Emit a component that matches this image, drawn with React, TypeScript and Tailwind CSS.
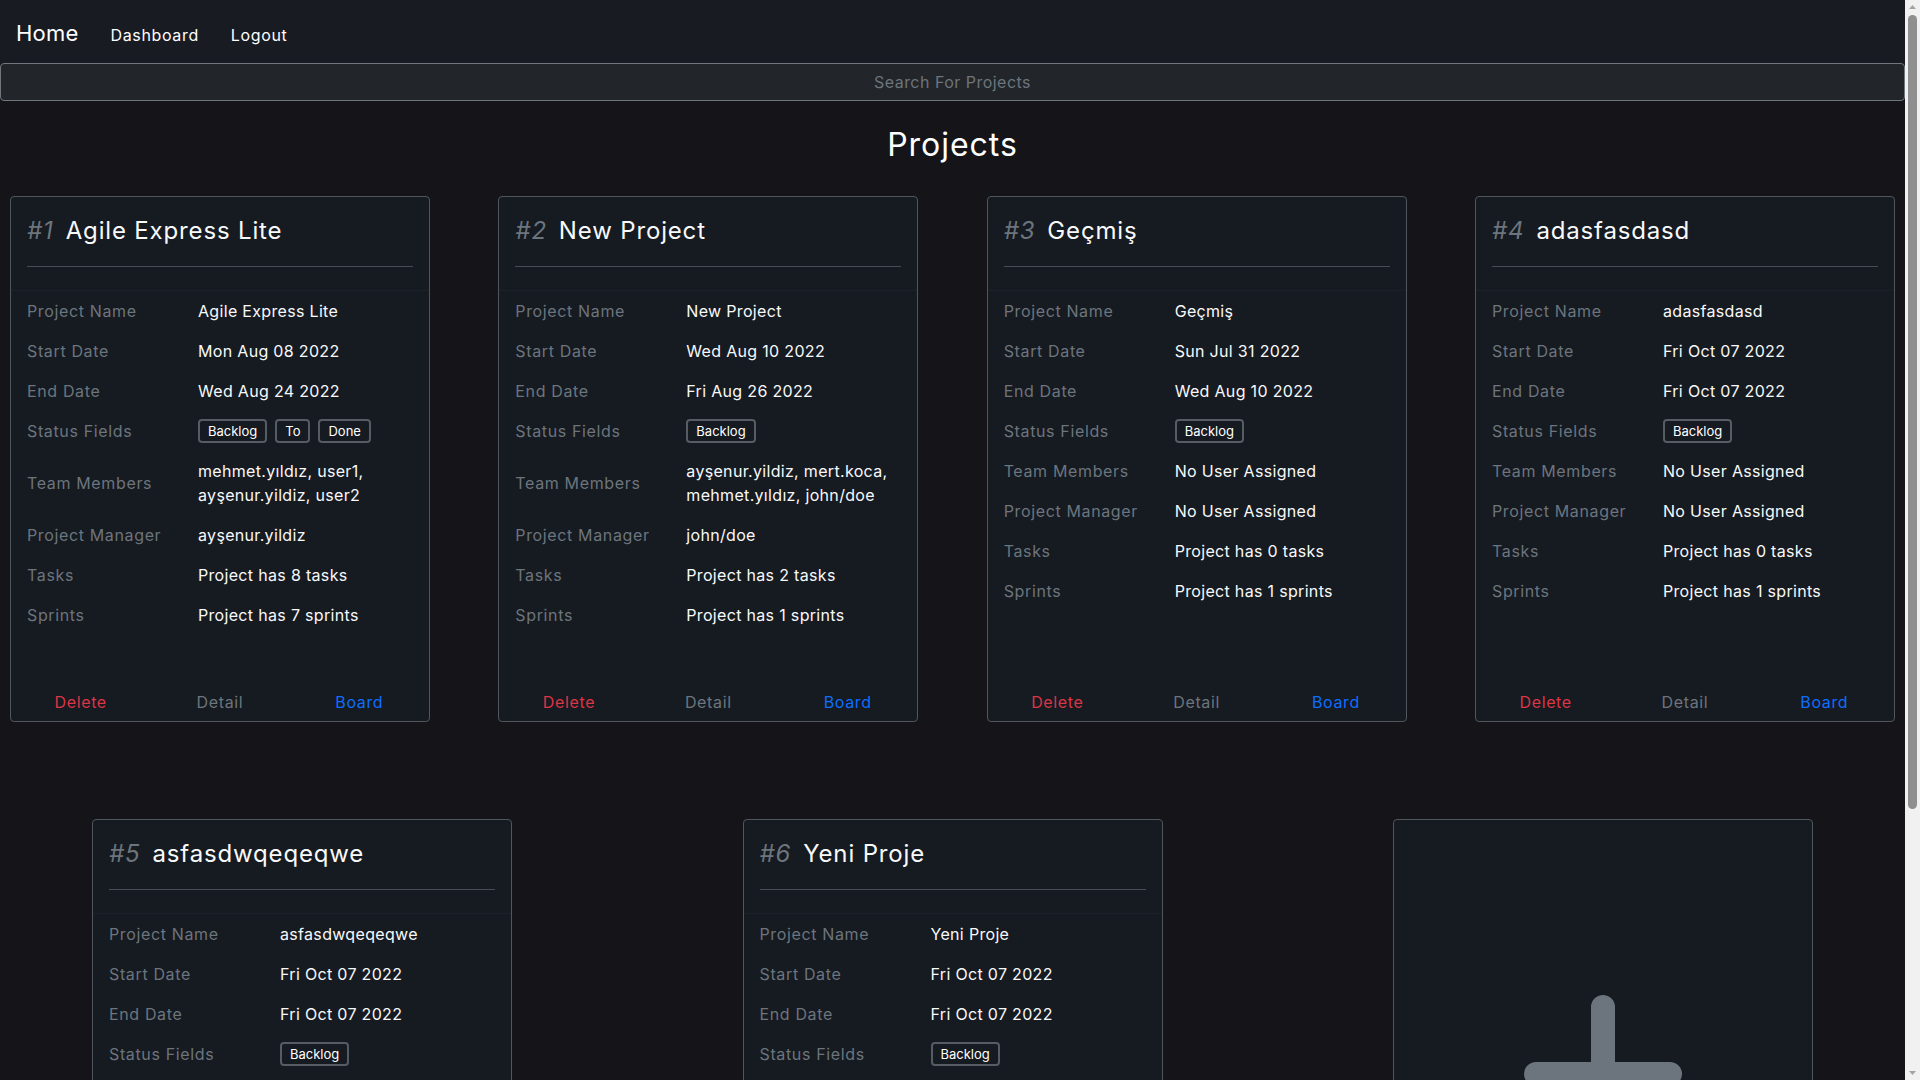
import React from 'react';

type Project = {
  id: number;
  name: string;
  start: string;
  end: string;
  statuses: string[];
  team: string[];
  manager: string;
  tasks: number;
  sprints: number;
};

const projects: Project[] = [
  {
    id: 1,
    name: 'Agile Express Lite',
    start: 'Mon Aug 08 2022',
    end: 'Wed Aug 24 2022',
    statuses: ['Backlog', 'To', 'Done'],
    team: ['mehmet.yıldız, user1,', 'ayşenur.yildiz, user2'],
    manager: 'ayşenur.yildiz',
    tasks: 8,
    sprints: 7,
  },
  {
    id: 2,
    name: 'New Project',
    start: 'Wed Aug 10 2022',
    end: 'Fri Aug 26 2022',
    statuses: ['Backlog'],
    team: ['ayşenur.yildiz, mert.koca,', 'mehmet.yıldız, john/doe'],
    manager: 'john/doe',
    tasks: 2,
    sprints: 1,
  },
  {
    id: 3,
    name: 'Geçmiş',
    start: 'Sun Jul 31 2022',
    end: 'Wed Aug 10 2022',
    statuses: ['Backlog'],
    team: ['No User Assigned'],
    manager: 'No User Assigned',
    tasks: 0,
    sprints: 1,
  },
  {
    id: 4,
    name: 'adasfasdasd',
    start: 'Fri Oct 07 2022',
    end: 'Fri Oct 07 2022',
    statuses: ['Backlog'],
    team: ['No User Assigned'],
    manager: 'No User Assigned',
    tasks: 0,
    sprints: 1,
  },
  {
    id: 5,
    name: 'asfasdwqeqeqwe',
    start: 'Fri Oct 07 2022',
    end: 'Fri Oct 07 2022',
    statuses: ['Backlog'],
    team: ['No User Assigned'],
    manager: 'No User Assigned',
    tasks: 0,
    sprints: 1,
  },
  {
    id: 6,
    name: 'Yeni Proje',
    start: 'Fri Oct 07 2022',
    end: 'Fri Oct 07 2022',
    statuses: ['Backlog'],
    team: ['No User Assigned'],
    manager: 'No User Assigned',
    tasks: 0,
    sprints: 1,
  },
];

function Row({ label, children }: { label: string; children: React.ReactNode }) {
  return (
    <div className="flex items-center py-2">
      <div className="w-[171px] shrink-0 text-[#6c757d] leading-6 tracking-[0.04em]">{label}</div>
      <div className="text-[#f8f9fa] leading-6">{children}</div>
    </div>
  );
}

function ProjectCard({ p }: { p: Project }) {
  return (
    <div className="w-[420px] h-[526px] shrink-0 flex flex-col rounded border border-[#4f565e] bg-[#161a21]">
      {/* header */}
      <div className="px-4 pt-4 pb-[23px] border-b border-[#1c2129]">
        <h3 className="flex items-center gap-3 text-2xl leading-9 tracking-[0.035em] text-[#f8f9fa]">
          <span className="italic text-[#6c757d]">#{p.id}</span>
          <span>{p.name}</span>
        </h3>
        <div className="mt-[17px] h-px bg-[#454d56]" />
      </div>

      {/* details */}
      <div className="px-4">
        <Row label="Project Name">{p.name}</Row>
        <Row label="Start Date">{p.start}</Row>
        <Row label="End Date">{p.end}</Row>
        <Row label="Status Fields">
          <div className="flex gap-2">
            {p.statuses.map((s) => (
              <span
                key={s}
                className="h-6 px-2 flex items-center rounded border-2 border-[#555c64] text-[13px] tracking-normal text-white"
              >
                {s}
              </span>
            ))}
          </div>
        </Row>
        <Row label="Team Members">
          {p.team.map((line) => (
            <div key={line} className="whitespace-nowrap">
              {line}
            </div>
          ))}
        </Row>
        <Row label="Project Manager">{p.manager}</Row>
        <Row label="Tasks">Project has {p.tasks} tasks</Row>
        <Row label="Sprints">Project has {p.sprints} sprints</Row>
      </div>

      {/* actions */}
      <div className="mt-auto grid grid-cols-3 text-center leading-6 tracking-[0.04em]">
        <button className="py-[7px] text-[#dc3545]">Delete</button>
        <button className="py-[7px] text-[#6c757d]">Detail</button>
        <button className="py-[7px] text-[#0d6efd]">Board</button>
      </div>
    </div>
  );
}

function AddCard() {
  return (
    <div className="w-[420px] h-[526px] shrink-0 flex items-center justify-center pb-4 rounded border border-[#4f565e] bg-[#161a21]">
      <svg width="158" height="158" viewBox="0 0 158 158" fill="none">
        <path d="M79 12V146M12 79H146" stroke="#6c757d" strokeWidth="24" strokeLinecap="round" />
      </svg>
    </div>
  );
}

function Scrollbar() {
  return (
    <div className="w-[15px] h-full shrink-0 flex flex-col items-center bg-[#f1f1f1]">
      <svg width="9" height="15" viewBox="0 0 9 15" className="shrink-0">
        <path d="M4.5 5L8 9H1Z" fill="#a3a3a3" />
      </svg>
      <div className="w-[9px] h-[794px] rounded-full bg-[#8f8f8f]" />
      <div className="flex-1" />
      <svg width="9" height="15" viewBox="0 0 9 15" className="shrink-0">
        <path d="M4.5 10L8 6H1Z" fill="#a3a3a3" />
      </svg>
    </div>
  );
}

export default function App() {
  return (
    <div
      className="flex h-screen w-full overflow-hidden bg-[#151519] text-base tracking-[0.02em] text-[#f8f9fa]"
      style={{ fontFamily: 'Inter, "Open Sans", sans-serif' }}
    >
      <div className="flex-1 min-w-0 overflow-hidden">
        <nav className="h-[63px] flex items-baseline gap-8 pl-4 pt-[21px] bg-[#181b22]">
          <span className="text-[22px] leading-6 tracking-[0.01em] text-white">Home</span>
          <a className="leading-6 tracking-[0.04em] text-white">Dashboard</a>
          <a className="leading-6 tracking-[0.04em] text-white">Logout</a>
        </nav>

        <div className="h-[38px] flex items-center justify-center rounded border border-[#70777e] bg-[#222529] tracking-[0.03em] text-[#6c757d]">
          Search For Projects
        </div>

        <h2 className="mt-[25px] text-[32px] leading-[38px] text-center tracking-[0.03em] text-white">
          Projects
        </h2>

        <div className="mt-[32px] flex justify-between px-[10px]">
          {projects.slice(0, 4).map((p) => (
            <ProjectCard key={p.id} p={p} />
          ))}
        </div>

        <div className="mt-[97px] flex justify-between px-[92px]">
          {projects.slice(4).map((p) => (
            <ProjectCard key={p.id} p={p} />
          ))}
          <AddCard />
        </div>
      </div>
      <Scrollbar />
    </div>
  );
}
